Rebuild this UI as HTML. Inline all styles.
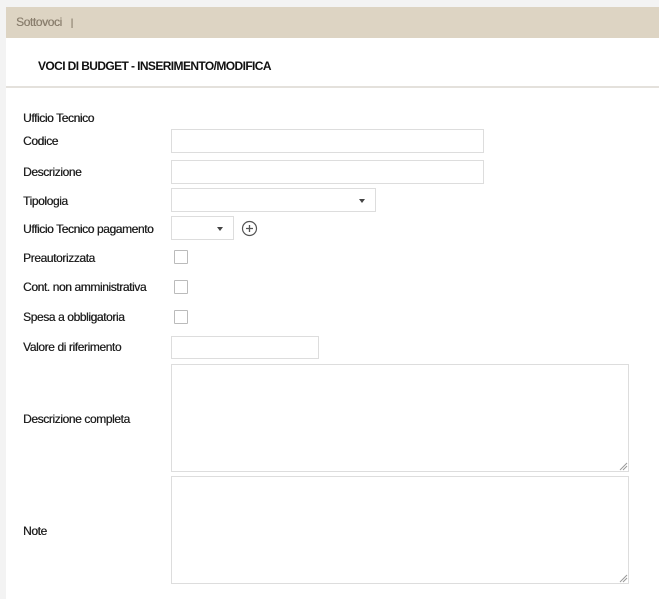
<!DOCTYPE html>
<html><head><style>
body{margin:0;width:659px;height:599px;background:#f3f3f3;font-family:"Liberation Sans",Arial,sans-serif;font-size:12px;color:#222;position:relative;overflow:hidden}
.abs{position:absolute}
.bar{left:6px;top:7px;width:653px;height:31px;background:#ddd4c3}
.card{left:6px;top:38px;width:653px;height:561px;background:#fff}
.hr{left:6px;top:86px;width:653px;height:2px;background:#e4e1dc}
.lab{left:23px;letter-spacing:-0.4px;line-height:14px;text-shadow:0.3px 0 0 #222}
.in{border:1px solid #ddd;background:#fff;box-sizing:border-box}
.cb{width:14px;height:14px;border:1px solid #bbb;box-sizing:border-box;border-radius:1px}
.car{width:0;height:0;border-left:3.5px solid transparent;border-right:3.5px solid transparent;border-top:4px solid #444}
</style></head><body>
<div class="abs bar"></div>
<div class="abs" style="left:16px;top:15px;color:#8a7f6e;font-size:12px;letter-spacing:-0.4px;text-shadow:0.3px 0 0 #8a7f6e">Sottovoci &nbsp;&nbsp;<span style="font-size:10px">|</span></div>
<div class="abs card"></div>
<div class="abs" style="left:38px;top:59px;font-size:12px;color:#111;font-weight:bold;letter-spacing:-0.6px">VOCI DI BUDGET - INSERIMENTO/MODIFICA</div>
<div class="abs hr"></div>
<div class="abs lab" style="top:111px">Ufficio Tecnico</div>
<div class="abs lab" style="top:134px">Codice</div>
<div class="abs lab" style="top:165px">Descrizione</div>
<div class="abs lab" style="top:194px">Tipologia</div>
<div class="abs lab" style="top:222px">Ufficio Tecnico pagamento</div>
<div class="abs lab" style="top:251px">Preautorizzata</div>
<div class="abs lab" style="top:280px">Cont. non amministrativa</div>
<div class="abs lab" style="top:310px">Spesa a obbligatoria</div>
<div class="abs lab" style="top:340px">Valore di riferimento</div>
<div class="abs lab" style="top:412px">Descrizione completa</div>
<div class="abs lab" style="top:524px">Note</div>
<div class="abs in" style="left:171px;top:129px;width:313px;height:24px"></div>
<div class="abs in" style="left:171px;top:160px;width:313px;height:24px"></div>
<div class="abs in" style="left:171px;top:188px;width:205px;height:24px"></div>
<div class="abs car" style="left:359px;top:199px"></div>
<div class="abs in" style="left:171px;top:216px;width:63px;height:24px"></div>
<div class="abs car" style="left:217px;top:227px"></div>
<svg class="abs" style="left:241px;top:220px" width="17" height="17" viewBox="0 0 17 17"><circle cx="8.5" cy="8.5" r="7" fill="none" stroke="#555" stroke-width="1.2"/><path d="M8.5 5v7M5 8.5h7" stroke="#555" stroke-width="1.3"/></svg>
<div class="abs cb" style="left:174px;top:250px"></div>
<div class="abs cb" style="left:174px;top:280px"></div>
<div class="abs cb" style="left:174px;top:310px"></div>
<div class="abs in" style="left:171px;top:336px;width:148px;height:23px"></div>
<div class="abs in" style="left:171px;top:364px;width:458px;height:108px"></div>
<svg class="abs" style="left:619px;top:462px" width="9" height="9"><path d="M1 8L8 1M4 8L8 4" stroke="#999"/></svg>
<div class="abs in" style="left:171px;top:476px;width:458px;height:108px"></div>
<svg class="abs" style="left:619px;top:574px" width="9" height="9"><path d="M1 8L8 1M4 8L8 4" stroke="#999"/></svg>
</body></html>
